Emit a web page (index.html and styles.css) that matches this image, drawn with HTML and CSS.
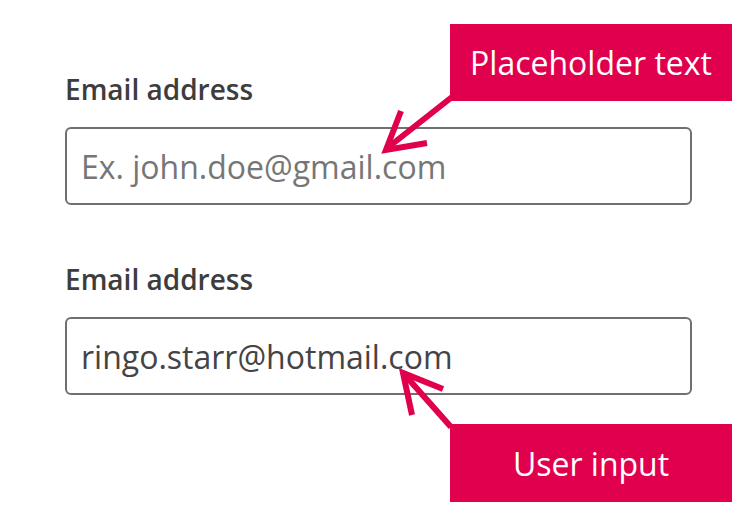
FILE: index.html
```html
<!DOCTYPE html>
<html lang="en">
<head>
    <meta charset="UTF-8">
    <meta name="viewport" content="width=device-width, initial-scale=1.0">
    <title>Placeholder vs user input</title>
    <link rel="stylesheet" href="styles.css">
</head>
<body>
<div class="canvas">
    <form class="form">
        <div class="field">
            <label for="email1">Email address</label>
            <input type="email" id="email1" placeholder="Ex. john.doe@gmail.com">
        </div>
        <div class="field">
            <label for="email2">Email address</label>
            <input type="email" id="email2" value="ringo.starr@hotmail.com">
        </div>
    </form>

    <!-- annotations -->
    <div class="callout callout-top">Placeholder text</div>
    <div class="callout callout-bottom">User input</div>
    <svg class="arrows" width="756" height="528" viewBox="0 0 756 528">
        <g fill="none" stroke="#e0004d" stroke-width="6" stroke-linecap="butt">
            <path d="M452 97 L386 149"/>
            <path d="M401 111 L386 150 L427 143"/>
            <path d="M451 427 L404 374"/>
            <path d="M412 415 L403 373 L443 389"/>
        </g>
    </svg>
</div>
</body>
</html>
```

FILE: styles.css
```css
:root {
    --text: #3d3d3d;
    --border: #707070;
    --accent: #e0004d;
}
body {
    margin: 0;
    background: #ffffff;
    font-family: 'Open Sans', 'Noto Sans', sans-serif;
    color: var(--text);
}
.canvas {
    position: relative;
    width: 756px;
    height: 528px;
    overflow: hidden;
}
.form {
    padding: 72px 0 0 65px;
    display: flex;
    flex-direction: column;
    gap: 57px;
    width: 627px;
}
.field {
    display: flex;
    flex-direction: column;
    gap: 21px;
}
.field label {
    font-size: 28px;
    font-weight: 600;
    line-height: 34px;
    color: var(--text);
}
.field input {
    box-sizing: border-box;
    height: 78px;
    width: 100%;
    margin: 0;
    padding: 0 14px;
    border: 2px solid var(--border);
    border-radius: 6px;
    font-family: inherit;
    font-size: 32px;
    color: #444;
    background: #fff;
    outline: none;
}
.field input::placeholder {
    color: #767676;
    opacity: 1;
}
.callout {
    position: absolute;
    left: 450px;
    width: 282px;
    height: 77px;
    background: var(--accent);
    color: #fff;
    font-size: 32px;
    display: flex;
    align-items: center;
    justify-content: center;
}
.callout-top {
    top: 24px;
}
.callout-bottom {
    top: 424px;
    height: 78px;
}
.arrows {
    position: absolute;
    left: 0;
    top: 0;
    pointer-events: none;
}
```
